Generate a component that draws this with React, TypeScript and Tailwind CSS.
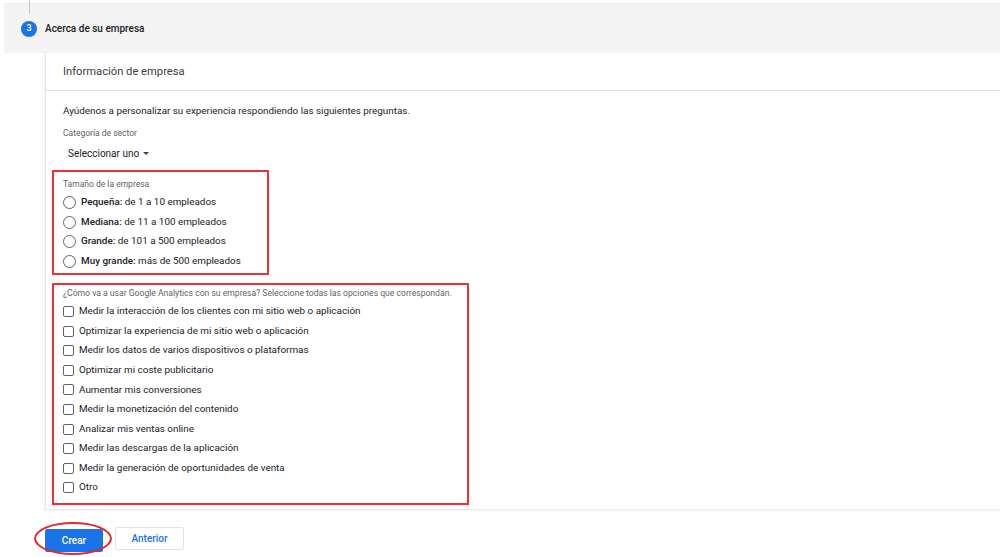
import { useState } from "react";

const sizes = [
  { bold: "Pequeña:", rest: "de 1 a 10 empleados" },
  { bold: "Mediana:", rest: "de 11 a 100 empleados" },
  { bold: "Grande:", rest: "de 101 a 500 empleados" },
  { bold: "Muy grande:", rest: "más de 500 empleados" },
];

const uses = [
  "Medir la interacción de los clientes con mi sitio web o aplicación",
  "Optimizar la experiencia de mi sitio web o aplicación",
  "Medir los datos de varios dispositivos o plataformas",
  "Optimizar mi coste publicitario",
  "Aumentar mis conversiones",
  "Medir la monetización del contenido",
  "Analizar mis ventas online",
  "Medir las descargas de la aplicación",
  "Medir la generación de oportunidades de venta",
  "Otro",
];

function RadioRow({ bold, rest }: { bold: string; rest: string }) {
  return (
    <label className="flex h-[19.5px] items-center gap-[5px] text-[9.9px] text-[#202124]">
      <span className="h-[13px] w-[13px] rounded-full border-[1.5px] border-[#5f6368]" />
      <span>
        <span className="font-medium">{bold}</span> {rest}
      </span>
    </label>
  );
}

function CheckRow({ text }: { text: string }) {
  return (
    <label className="flex h-[19.55px] items-center gap-[5px] text-[9.9px] text-[#202124]">
      <span className="h-[11px] w-[11px] rounded-[2px] border-[1.5px] border-[#5f6368]" />
      <span>{text}</span>
    </label>
  );
}

export default function App() {
  const [open] = useState(true);

  return (
    <div className="relative min-h-[557px] overflow-hidden bg-white font-['Roboto',sans-serif]">
      <span className="absolute left-[29px] top-0 h-[14px] w-px bg-[#c4c4c4]" />

      {/* step header */}
      <div className="ml-[4px] mt-[3px] flex h-[50px] items-center border-t border-[#ececec] bg-[#f4f4f4] pl-[17px]">
        <span className="flex h-[16px] w-[16px] items-center justify-center rounded-full bg-[#1a73e8] text-[9px] font-medium text-white">
          3
        </span>
        <span className="ml-[8px] text-[10px] font-medium text-[#202124]">Acerca de su empresa</span>
      </div>

      {open && (
        <div className="ml-[45px] border-l border-[#e6e6e6] bg-white pb-[4px] shadow-[0_1px_2px_rgba(0,0,0,0.12)]">
          <div className="flex h-[38px] items-center border-b border-[#e0e0e0] pl-[17px] pt-[1px] text-[11.2px] text-[#3c4043]">
            Información de empresa
          </div>

          <div className="pl-[6px]">
            <p className="mt-[13px] pl-[11px] text-[9.86px] leading-[14px] text-[#202124]">
              Ayúdenos a personalizar su experiencia respondiendo las siguientes preguntas.
            </p>
            <p className="mt-[9px] pl-[11px] text-[8.5px] leading-[12px] text-[#5f6368]">Categoría de sector</p>
            <button className="mt-[7px] flex h-[14px] items-center gap-[4px] pl-[16px] text-[10px] text-[#202124]">
              Seleccionar uno
              <span className="h-0 w-0 border-x-[3px] border-t-[3px] border-x-transparent border-t-[#3c4043]" />
            </button>

            <div className="mt-[10px] h-[105px] w-[217px] border-2 border-[#ec3237] pl-[9px] pt-[6px]">
              <p className="text-[8.5px] leading-[12px] text-[#5f6368]">Tamaño de la empresa</p>
              <div className="mt-[3px]">
                {sizes.map((s) => (
                  <RadioRow key={s.bold} bold={s.bold} rest={s.rest} />
                ))}
              </div>
            </div>

            <div className="mt-[8px] h-[222px] w-[417px] border-2 border-[#ec3237] pl-[9px] pt-[2px]">
              <p className="text-[8.6px] leading-[12px] text-[#5f6368]">
                ¿Cómo va a usar Google Analytics con su empresa? Seleccione todas las opciones que correspondan.
              </p>
              <div className="mt-[3px]">
                {uses.map((u) => (
                  <CheckRow key={u} text={u} />
                ))}
              </div>
            </div>
          </div>
        </div>
      )}

      <div className="ml-[45px] mt-[18px] flex gap-[12px]">
        <div className="relative">
          <button className="h-[23px] w-[58px] rounded-[2px] bg-[#1a73e8] text-[10px] font-medium text-white">Crear</button>
          <span className="absolute left-[-11px] top-[-5px] h-[33px] w-[78px] rounded-[50%] border-2 border-[#e8262d]" />
        </div>
        <button className="h-[23px] w-[69px] rounded-[2px] border border-[#e3e3e3] bg-white text-[10px] font-medium text-[#1a73e8]">
          Anterior
        </button>
      </div>
    </div>
  );
}
